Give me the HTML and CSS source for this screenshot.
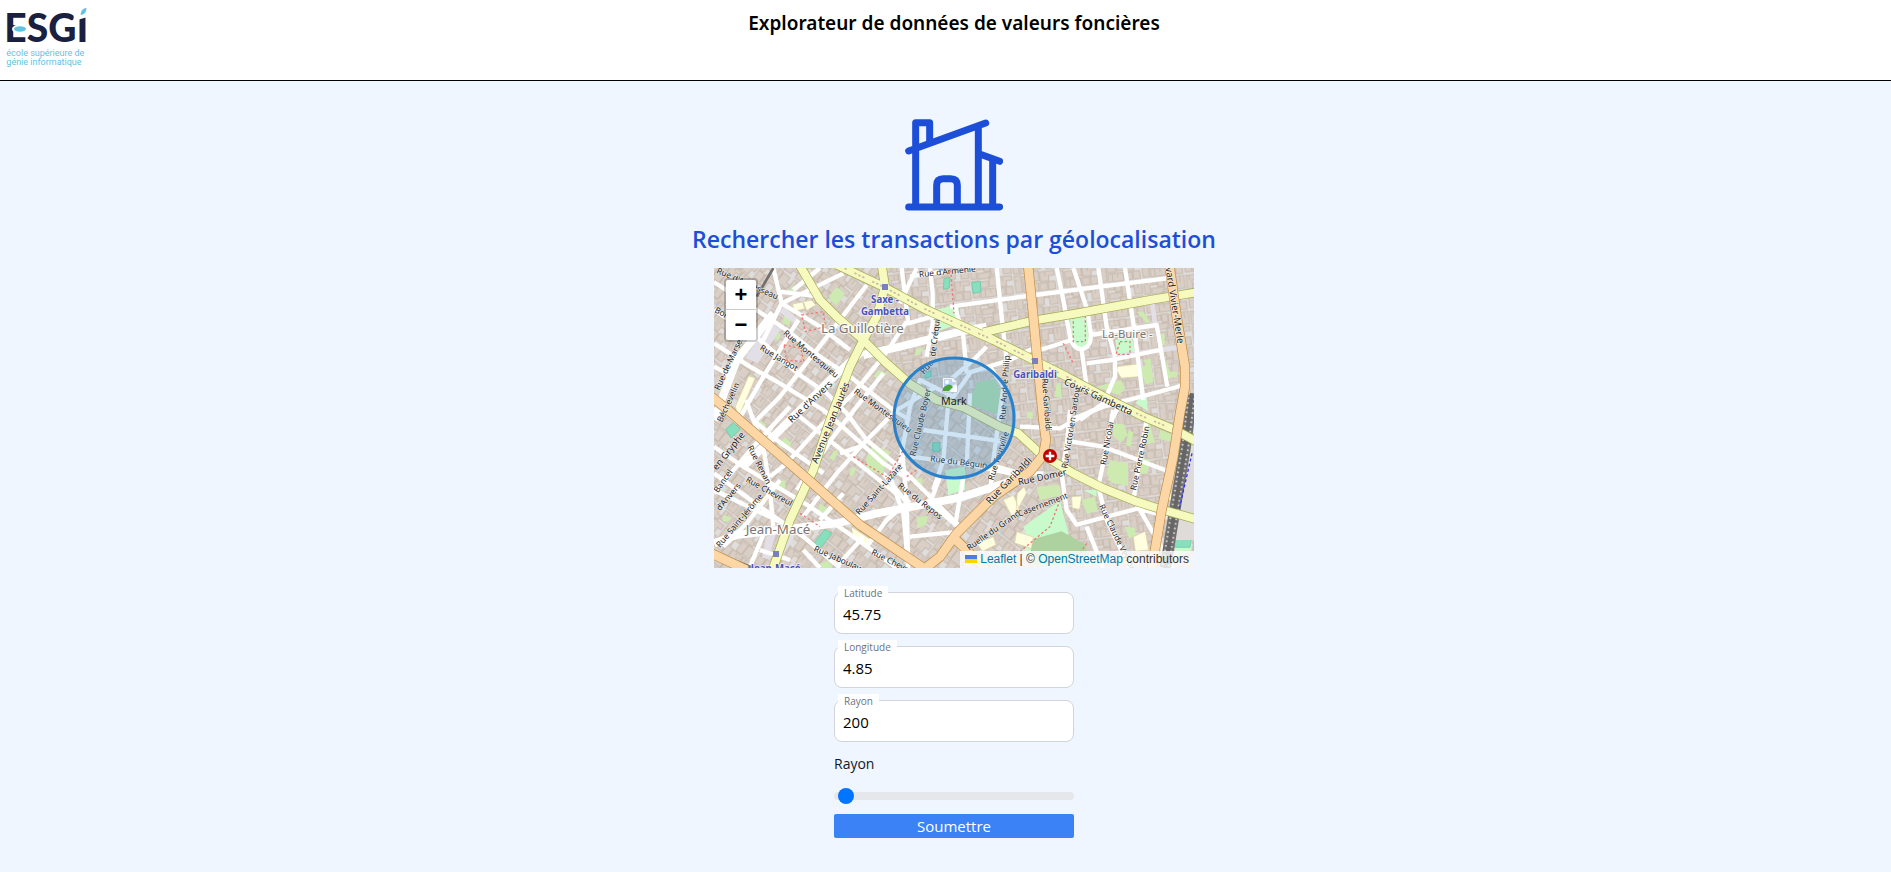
FILE: index.html
```html
<!DOCTYPE html>
<html lang="fr">
<head>
<meta charset="utf-8">
<title>Explorateur de données de valeurs foncières</title>
<link rel="stylesheet" href="styles.css">
</head>
<body>
<header class="topbar">
  <a class="logo" href="#" aria-label="ESGI">
    <svg viewBox="20 22 244 186" width="82" height="62">
      <text class="logo-name" x="14" y="128">ESGI</text>
      <ellipse cx="61" cy="88" rx="24" ry="14" fill="#fff"/>
      <ellipse cx="61" cy="88" rx="18" ry="8" fill="#62c3e0"/>
      <path d="M222 22h42v30l-42 12z" fill="#fff"/>
      <path d="M243 46c0-12 5-19 17-22 1 12-4 19-17 22z" fill="#62c3e0"/>
      <text class="logo-sub" x="20" y="169">école supérieure de</text>
      <text class="logo-sub" x="20" y="197">génie informatique</text>
    </svg>
  </a>
  <h1 class="title">Explorateur de données de valeurs foncières</h1>
</header>
<main class="content">
  <svg class="house" viewBox="45 28 294 274" fill="none" stroke="currentColor" stroke-width="21" stroke-linecap="round" stroke-linejoin="round">
    <path d="M56 291H329M56 123L287 39M77 291V38H119V98M265 48V291M275 134L329 154M308 150V291M140 291V226Q140 206 160 206H182Q202 206 202 226V291"/>
  </svg>
  <h2 class="heading">Rechercher les transactions par géolocalisation</h2>
  <section class="map" aria-label="Carte">
    <svg class="tiles" viewBox="12 24 1440 900" preserveAspectRatio="xMidYMid slice">
      <defs>
        <pattern id="blocks-a" width="132" height="112" patternUnits="userSpaceOnUse" patternTransform="rotate(38)">
          <rect width="132" height="112" fill="#e0dedd"/>
          <g fill="#d9cfc6" stroke="#c8baae" stroke-width="3">
            <path d="M3 4h32v22H18v16H3zM37 3h26v34H37zM66 6h24v18h12v16H66zM104 3h25v30h-25zM3 46h22v28H3zM28 42h38v14H48v20H28zM70 44h20v34H70zM92 42h36v16h-12v18H92zM3 78h34v30H3zM40 80h20v28H40zM62 82h36v12H84v14H62zM101 80h28v28h-28z"/>
            <path d="M12 4v18M50 3v18M78 80v12M112 80v14M10 80v28M116 3v16M28 62h18"/>
          </g>
        </pattern>
        <pattern id="blocks-b" width="128" height="108" patternUnits="userSpaceOnUse" patternTransform="rotate(-7)">
          <rect width="128" height="108" fill="#e0dedd"/>
          <g fill="#d9cfc6" stroke="#c8baae" stroke-width="3">
            <path d="M3 4h38v16H20v26H3zM44 3h18v24H44zM64 5h34v14H84v20H64zM101 3h24v38h-24zM24 30h36v18H24zM3 52h20v50H3zM27 56h24v20H27zM55 44h22v30H55zM80 48h44v14h-18v16H80zM27 80h46v24H27zM77 82h22v22H77zM103 80h20v24h-20z"/>
            <path d="M12 4v14M30 4v14M88 5v12M112 3v20M12 66H3M40 80v22M56 80v12M96 48v14"/>
          </g>
        </pattern>
      </defs>
      <rect x="12" y="24" width="1440" height="900" fill="url(#blocks-a)"/>
      <path d="M520 24H1452V924H960L1010 700 900 500 620 380 460 240z" fill="url(#blocks-b)"/>

      <g fill="#cdebb0">
        <path d="M240 85l35-20 5 10-38 28zM225 160l20 10-8 28-20-10zM192 212l20 8-6 22-24-14zM360 105l20-24 25 20-25 35-22-16zM505 330l28 10-28 22-14-14zM620 268l22-6-14 22-16 4zM204 560l20-28 20 16-6 20zM470 590l20-35 50 20-10 25-12 45-50-18zM370 575l16-8-14 36-14-10zM425 620l14 6-12 24-10-8zM330 730l34 24-16 18-26-14zM190 670l34-10 2 26-30-4zM620 770l34-2-6 26-26 12zM612 655l26 0-2 26-28-8zM150 480l18 14-8 16-12-8zM40 765l26 8-14 14-14-4zM330 910l26-8 12 22-34 0zM1280 155h20l20 32-10 2zM1350 222h14v34h-14zM1300 300l22-4 8 70-24 8-18-52 20-8zM1370 300l8 34 26 2-4 14-34 6zM1040 370h12l4 44-22-4zM1160 380l72-20 14 24-20 22zM1212 492h30l10 34-20 22-24-22zM1248 555l8-46 14 8-8 44zM1190 640l10-40 54 10v68l-50-10zM1300 500l20-12 14 60-24 4zM1290 640l8-46 22 6-8 42zM1350 510l40 14-4 22-40-10zM990 470l36 14-12 40-28-12zM1115 720l38-10 10 40-32 12zM980 680l68-6 6 32-64 14zM1244 800l30 4 4 22-20 10zM1330 825l12 0-3 28zM950 455l18 0 0 20-16 0z"/>
      </g>
      <g fill="#c8facc">
        <path d="M676 150l70-18v60l-62 22zM720 142l22 4 2 36-24 6zM1080 170h48l10 80-24 16-30-14zM1216 240l50-6 12 48-56 8zM1290 415l20-6 4 44-38-24zM705 630l60-10v70l-50 14zM940 800l110-78 26 100-30 72h-110l20-50zM1120 690l40 0 0 20zM1395 830h50v40l-50 30z"/>
      </g>
      <path d="M802 366l52-8 14 30 2 78-96-34z" fill="#b4dfae"/>
      <path d="M960 840l95-26 72 40 10 60h-170z" fill="#aed1a0"/>
      <g fill="#ffffe0" stroke="#dcd0a4" stroke-width="2">
        <path d="M248 132l30-6 6 20-32 8zM280 125l24-4 14 14-28 16zM86 470l50-116-20-6-40 92zM1222 320l60-8 4 38-52 4-14-22zM922 700l20-20 8 18-32 60zM880 720l30-14 18 40-22 24zM1085 710l30-2-6 40-22-4zM1270 830l36-16 10 56-40 4zM920 815l50 16-6 34-50-16zM424 800l60 40-6 20-50-36zM800 850l50-20 8 24-40 20zM1370 700h14v20h-14z"/>
      </g>
      <g fill="#88dfbe" stroke="#5ec79e" stroke-width="2">
        <path d="M47 508l24-20 20 20-28 26zM312 850l32-42 22 12-34 44zM785 68l26-4 2 32-24 4zM668 548h22v26h-22zM702 56l18-4-2 32-18 4zM1394 828h52l-6 34h-46zM644 340l20-8-2 18-16 6z"/>
      </g>
      <path d="M12 350l90-20-80 110-10-20z" fill="#d8d0c9"/>
      <g fill="#e3dfe6">
        <path d="M222 140l50 44-14 12-50-40zM180 180l30 30-66 100-38-16zM1320 130h14l8 60h-14zM1200 285l200-30v16l-198 26zM168 830l30-10-22 74-20 0zM228 800l20-8 4 40-36 60z"/>
        <path d="M1392 630l60-120v330h-60z" fill="#dedbd9"/>
      </g>

      <g class="minor">
        <path d="M12 66L230 210 330 290 420 350 550 450 600 480M12 250L120 320 210 370 340 450 420 520 520 610 600 660"/>
        <path d="M12 150L150 240 270 345 350 400 410 460 470 540 590 640 750 800M12 320L70 350"/>
        <path d="M160 240L215 130 400 40M190 24L215 130 330 200 420 270M330 110L210 95"/>
        <path d="M470 75L340 245 210 410 140 480M330 24L250 90M265 180L160 350 80 490M570 130L620 24M590 185L520 290 430 400 330 500 230 610 180 650"/>
        <path d="M520 340L440 440 370 530 260 690M680 380L560 450 470 540 380 640 280 770M575 24L595 190 700 160M660 24L668 100 668 190 650 290M600 50L700 34"/>
        <path d="M12 560L100 620 250 710 300 740 430 830 560 924M12 640L150 740 280 830 390 924M12 690L240 800M108 420L160 560 180 690 190 800M12 700L130 560 240 440M40 860L110 790 210 660"/>
        <path d="M130 480L200 540 340 640M250 455L420 590 570 710M400 700L330 780M390 580L450 560M540 650L580 760 595 924M575 560L590 720 595 924M690 650L660 730M520 640L600 740M600 830L750 815M650 720L750 805M470 860L530 780 600 720M380 920L460 830M150 870L240 900M280 870L330 924M120 920L170 800"/>
        <path d="M720 140L900 115 1130 85 1370 55M860 24L875 170 890 300M735 140L760 230 770 340M1040 24L1060 120 1080 230Q1090 268 1115 268Q1145 262 1142 220L1132 150 1090 24M1165 24L1190 200 1215 290M1245 24L1270 190 1300 420M990 270L1085 240M1115 270L1130 380M1130 310L1205 300 1350 270M1140 225L1340 195 1372 380M1215 290L1215 350 1180 430 1110 480M1080 480L1180 440 1412 378M1230 430L1205 480M770 340L900 300 970 265M830 260L790 300 720 360"/>
        <path d="M780 340L730 410 630 360 600 440 570 610M600 590L770 612 900 640 1000 640M720 370L700 600 670 690M840 320L880 380 850 600 840 700M640 510L880 545M780 400L770 620M930 500L1050 505 1150 450M1080 450L1070 560 1055 640 1070 750 1100 794 1290 744M1085 545L1180 560 1375 634M1210 450L1190 560 1165 680 1190 780 1260 924M1310 480L1290 590 1272 710M1350 490L1400 520M1130 800L1180 924M930 640L860 620M760 650L735 800M1280 744L1370 770M1290 750L1390 924"/>
      </g>
      <path class="wide" d="M12 850L80 825 380 790 500 760 750 713 900 665 920 650M460 285L570 260 750 215 830 200M460 270L350 370 230 490 100 620M12 480L80 300 190 160"/>
      <g fill="none" stroke="#e77" stroke-width="4" stroke-dasharray="7 7">
        <path d="M275 165l65-10 6 45-60 15zM222 255l50 10 10 40-52-4zM1090 170v75h36v-75M1230 245h30v38h-42zM430 590l100 60M1050 720l-30 80-120 100M1130 850l-50 74M540 640l40-70M1060 250l30 60M722 30l10 130M590 650l30-20M270 760l60 40"/>
      </g>
      <g stroke-linejoin="round" fill="none">
        <path d="M140 110L190 24" stroke="#707070" stroke-width="8"/>
        <path d="M12 876L130 924" stroke="#707070" stroke-width="8"/>
        <path d="M1446 400L1426 560 1396 740 1366 924" stroke="#707070" stroke-width="34"/>
        <path d="M1446 400L1426 560 1396 740 1366 924" stroke="#c9c6c4" stroke-width="24" stroke-dasharray="5 9"/>
        <path d="M1446 400L1426 560 1396 740 1366 924" stroke="#666" stroke-width="12"/>
        <path d="M1446 580L1400 780" stroke="#33f" stroke-width="4" stroke-dasharray="9 7"/>
      </g>
      <g class="yellow-case">
        <path d="M268 14L330 120 380 170 460 240 530 310 600 372 680 420 760 442 870 500 925 520 990 580 1090 640 1180 685 1280 725 1360 750 1460 778"/>
        <path d="M515 14L525 80 500 170 460 240 420 320 360 480 310 630 240 780 186 934"/>
        <path d="M1460 97L1320 120 1100 160 970 182 820 217"/>
        <path d="M380 14L520 80 640 145 750 195 850 240 980 305 1070 350 1200 420 1300 470 1400 512 1460 545"/>
      </g>
      <g class="yellow">
        <path d="M268 14L330 120 380 170 460 240 530 310 600 372 680 420 760 442 870 500 925 520 990 580 1090 640 1180 685 1280 725 1360 750 1460 778"/>
        <path d="M515 14L525 80 500 170 460 240 420 320 360 480 310 630 240 780 186 934"/>
        <path d="M1460 97L1320 120 1100 160 970 182 820 217"/>
        <path d="M380 14L520 80 640 145 750 195 850 240 980 305 1070 350 1200 420 1300 470 1400 512 1460 545"/>
      </g>
      <path d="M380 14L520 80 640 145 750 195 850 240 980 305 1070 350 1200 420 1300 470 1400 512" fill="none" stroke="#c9b8a0" stroke-width="5" stroke-dasharray="7 6 7 6 7 26"/>
      <g class="orange-case">
        <path d="M4 410L60 455 290 655 450 795 620 910 650 930"/>
        <path d="M954 14L970 170 982 300 1000 480 1008 540 1000 585 960 635 850 710 740 820 690 890 640 930"/>
        <path d="M736 838L790 890 830 930"/>
        <path d="M1378 14L1400 170 1425 320 1425 380 1410 460 1390 590 1355 750 1325 930"/>
        <path d="M4 880L110 930"/>
      </g>
      <g class="orange">
        <path d="M4 410L60 455 290 655 450 795 620 910 650 930"/>
        <path d="M954 14L970 170 982 300 1000 480 1008 540 1000 585 960 635 850 710 740 820 690 890 640 930"/>
        <path d="M736 838L790 890 830 930"/>
        <path d="M1378 14L1400 170 1425 320 1425 380 1410 460 1390 590 1355 750 1325 930"/>
        <path d="M4 880L110 930"/>
      </g>
      <g fill="#7a7fbd"><path d="M516 72h18v18h-18zM966 294h18v18h-18zM189 873h18v18h-18z"/></g>
      <circle cx="1020" cy="588" r="21" fill="#bf0000"/>
      <path d="M1020 575v26M1007 588h26" stroke="#fff" stroke-width="7"/>

      <g class="street">
        <text transform="translate(18 38) rotate(24)">Rue d'Aguesseau</text>
        <text transform="translate(12 155) rotate(30)">Bonald</text>
        <text transform="translate(28 392) rotate(-65)">Rue-de-Marseille</text>
        <text transform="translate(36 488) rotate(-65)">Béchevelin</text>
        <text transform="translate(218 222) rotate(40)">Rue Montesquieu</text>
        <text transform="translate(148 268) rotate(31)">Rue Jangot</text>
        <text transform="translate(245 490) rotate(-43)" class="mid">Rue d'Anvers</text>
        <text transform="translate(322 612) rotate(-68)" class="big">Avenue Jean Jaurès</text>
        <text transform="translate(430 398) rotate(36)">Rue Montesquieu</text>
        <text transform="translate(628 52) rotate(-6)">Rue d'Arménie</text>
        <text transform="translate(642 344) rotate(-50)">Rue</text>
        <text transform="translate(676 290) rotate(-83)">de Créqui</text>
        <text transform="translate(616 590) rotate(-77)">Rue Claude Boyer</text>
        <text transform="translate(660 604) rotate(7)">Rue du Béguin</text>
        <text transform="translate(20 632) rotate(-51)" class="mid">en Gryphe</text>
        <text transform="translate(112 562) rotate(63)">Rue Renan</text>
        <text transform="translate(106 664) rotate(29)">Rue Chevreul</text>
        <text transform="translate(24 700) rotate(-55)">Bancel</text>
        <text transform="translate(30 754) rotate(-50)">d'Anvers</text>
        <text transform="translate(30 864) rotate(-50)">Rue Saint-Jérôme</text>
        <text transform="translate(448 766) rotate(-48)">Rue Saint-Lazare</text>
        <text transform="translate(562 680) rotate(38)">Rue du Repos</text>
        <text transform="translate(310 872) rotate(24)">Rue Jaboulay</text>
        <text transform="translate(482 882) rotate(27)">Rue Chevreul</text>
        <text transform="translate(886 480) rotate(-86)">Rue André Philip</text>
        <text transform="translate(996 356) rotate(86)">Rue Garibaldi</text>
        <text transform="translate(1060 372) rotate(25)" class="big">Cours Gambetta</text>
        <text transform="translate(1364 8) rotate(81)" class="big">evard Vivier-Merle</text>
        <text transform="translate(1072 626) rotate(-81)">Rue Victorien Sardou</text>
        <text transform="translate(1188 616) rotate(-80)">Rue Nicolaï</text>
        <text transform="translate(1278 692) rotate(-78)">Rue Pierre Robin</text>
        <text transform="translate(850 662) rotate(-72)">Rue Tourville</text>
        <text transform="translate(840 734) rotate(-46)" class="big">Rue Garibaldi</text>
        <text transform="translate(926 676) rotate(-12)" class="mid">Rue Domer</text>
        <text transform="translate(778 872) rotate(-35)">Ruelle du Grand</text>
        <text transform="translate(928 770) rotate(-21)">Casernement</text>
        <text transform="translate(1166 738) rotate(64)">Rue Claude Veyron</text>
      </g>
      <g class="place">
        <text x="457" y="220">La Guillotière</text>
        <text x="204" y="821">Jean-Macé</text>
        <text x="1252" y="235" class="small">La-Buire -</text>
      </g>
      <g class="station">
        <text x="525" y="130">Saxe -</text>
        <text x="525" y="166">Gambetta</text>
        <text x="975" y="353">Garibaldi</text>
        <text x="197" y="936">Jean-Macé</text>
      </g>
      <circle class="radius" cx="732" cy="474" r="180"/>
      <g transform="translate(696 351) scale(3)">
        <path d="M.5.5H11L15 4.500V15H.5z" fill="#f2f6fb" stroke="#b6bcc4"/>
        <path d="M2 2h8v3h4v2L2 13z" fill="#bcd3f3"/>
        <circle cx="5" cy="5" r="2" fill="#fff"/>
        <path d="M1 14V11q5-5 8-3l2 2-4 4z" fill="#4aa53c"/>
        <path d="M8 15l7-7v7z" fill="#fff"/>
      </g>
      <text class="marker" x="693" y="436">Mark</text>
    </svg>
    <div class="zoom">
      <button type="button" aria-label="Zoom avant">+</button>
      <button type="button" aria-label="Zoom arrière">−</button>
    </div>
    <div class="credit">
      <svg width="12" height="8" viewBox="0 0 12 8"><path fill="#4C7BE1" d="M0 0h12v4H0z"/><path fill="#FFD500" d="M0 4h12v4H0z"/></svg>
      <a href="#">Leaflet</a> | © <a href="#">OpenStreetMap</a> contributors
    </div>
  </section>
  <form class="form">
    <div class="field"><input id="lat" type="text" value="45.75"><label for="lat">Latitude</label></div>
    <div class="field"><input id="lng" type="text" value="4.85"><label for="lng">Longitude</label></div>
    <div class="field"><input id="radius" type="text" value="200"><label for="radius">Rayon</label></div>
    <label class="range-label" for="range">Rayon</label>
    <input class="range" id="range" type="range" min="0" max="10000" value="200">
    <button class="submit" type="button">Soumettre</button>
  </form>
</main>
</body>
</html>
```
FILE: styles.css
```css
* { box-sizing: border-box; margin: 0; }
html, body { min-height: 100%; }
body {
  background: #eff6ff;
  color: #000;
  font-family: "Open Sans", "Noto Sans", sans-serif;
  font-size: 16px;
  line-height: 24px;
}
.topbar {
  display: grid;
  grid-template-columns: 1fr auto 1fr;
  align-items: start;
  min-height: 81px;
  padding: 7px 6px;
  background: #fff;
  border-bottom: 1px solid #000;
}
.logo { display: block; }
.logo svg { display: block; }
.logo-name { font: 900 117px Lato, sans-serif; fill: #1a2140; }
.logo-sub { font: 400 27px Roboto, sans-serif; fill: #62c3e0; }
.title {
  margin-left: 17px;
  padding-top: 2px;
  font-family: "Noto Sans", sans-serif;
  font-size: 19px;
  font-weight: 600;
  line-height: 28px;
}
.content {
  display: flex;
  flex-direction: column;
  align-items: center;
  padding: 38px 16px 32px 33px;
}
.house { width: 98px; height: 92px; color: #1d4ed8; }
.heading { margin: 12px 0 13px; font-size: 23px; font-weight: 600; line-height: 32px; color: #1d4ed8; text-align: center; }
.map {
  position: relative;
  width: 480px;
  max-width: 100%;
  height: 300px;
  overflow: hidden;
  font-family: "Liberation Sans", Arial, sans-serif;
  font-size: 12px;
}
.tiles { display: block; width: 100%; height: 100%; }
.tiles text { font-family: "Noto Sans", sans-serif; paint-order: stroke; stroke-linejoin: round; }
.minor, .wide { fill: none; stroke: #fff; stroke-width: 13px; stroke-linejoin: round; }
.wide { stroke-width: 24px; }
.yellow, .yellow-case, .orange, .orange-case { fill: none; stroke-linejoin: round; }
.yellow-case { stroke: #a3aa50; stroke-width: 28px; }
.yellow { stroke: #f7fabf; stroke-width: 24px; }
.orange-case { stroke: #bd8d48; stroke-width: 30px; }
.orange { stroke: #fcd6a4; stroke-width: 26px; }
.street { font-size: 25px; fill: #222; stroke: rgba(255, 255, 255, .6); stroke-width: 4px; }
.street .mid { font-size: 28px; }
.street .big { font-size: 29px; }
.place { font-size: 40px; fill: #777; stroke: rgba(255, 255, 255, .8); stroke-width: 7px; text-anchor: middle; }
.place .small { font-size: 34px; }
.station { font-size: 29px; font-weight: 700; fill: #4a53b5; stroke: rgba(255, 255, 255, .7); stroke-width: 5px; text-anchor: middle; }
.radius { fill: #3388cc; fill-opacity: .24; stroke: #2a81cb; stroke-width: 9px; }
.tiles .marker { font-size: 32px; fill: #222; }
.zoom {
  position: absolute;
  top: 10px;
  left: 10px;
  display: flex;
  flex-direction: column;
  border: 2px solid rgba(0, 0, 0, .2);
  border-radius: 4px;
  background-clip: padding-box;
}
.zoom button {
  width: 30px;
  height: 30px;
  padding: 0;
  border: 0;
  background: #fff;
  color: #000;
  font: bold 22px/30px "Liberation Sans", Arial, sans-serif;
}
.zoom button:first-child { border-bottom: 1px solid #ccc; border-radius: 2px 2px 0 0; }
.zoom button:last-child { border-radius: 0 0 2px 2px; }
.credit {
  position: absolute;
  right: 0;
  bottom: 0;
  padding: 0 5px;
  background: rgba(255, 255, 255, .8);
  color: #333;
  line-height: 17px;
  white-space: nowrap;
}
.credit a { color: #0078a8; text-decoration: none; }
.form { display: flex; flex-direction: column; width: 240px; margin-top: 24px; }
.field { position: relative; margin-bottom: 12px; }
.field input {
  display: block;
  width: 100%;
  height: 42px;
  padding: 2px 8px 0;
  border: 1px solid #d1d5db;
  border-radius: 8px;
  background: #fff;
  color: #000;
  font: 15px "Open Sans", "Noto Sans", sans-serif;
}
.field label {
  position: absolute;
  top: -6px;
  left: 4px;
  padding: 0 6px;
  background: #fff;
  color: #6b7280;
  font-size: 10px;
  line-height: 15px;
}
.range-label { font-size: 14px; font-weight: 500; line-height: 20px; color: #111827; }
.range {
  -webkit-appearance: none;
  appearance: none;
  width: 100%;
  height: 8px;
  margin: 18px 0 14px;
  border-radius: 8px;
  background: #e5e7eb;
}
.range::-webkit-slider-thumb {
  -webkit-appearance: none;
  width: 16px;
  height: 16px;
  border-radius: 50%;
  background: #0075ff;
}
.submit {
  height: 24px;
  padding: 0;
  border: 0;
  border-radius: 2px;
  background: #3b82f6;
  color: #fff;
  font: 15px/24px "Open Sans", "Noto Sans", sans-serif;
}
```
